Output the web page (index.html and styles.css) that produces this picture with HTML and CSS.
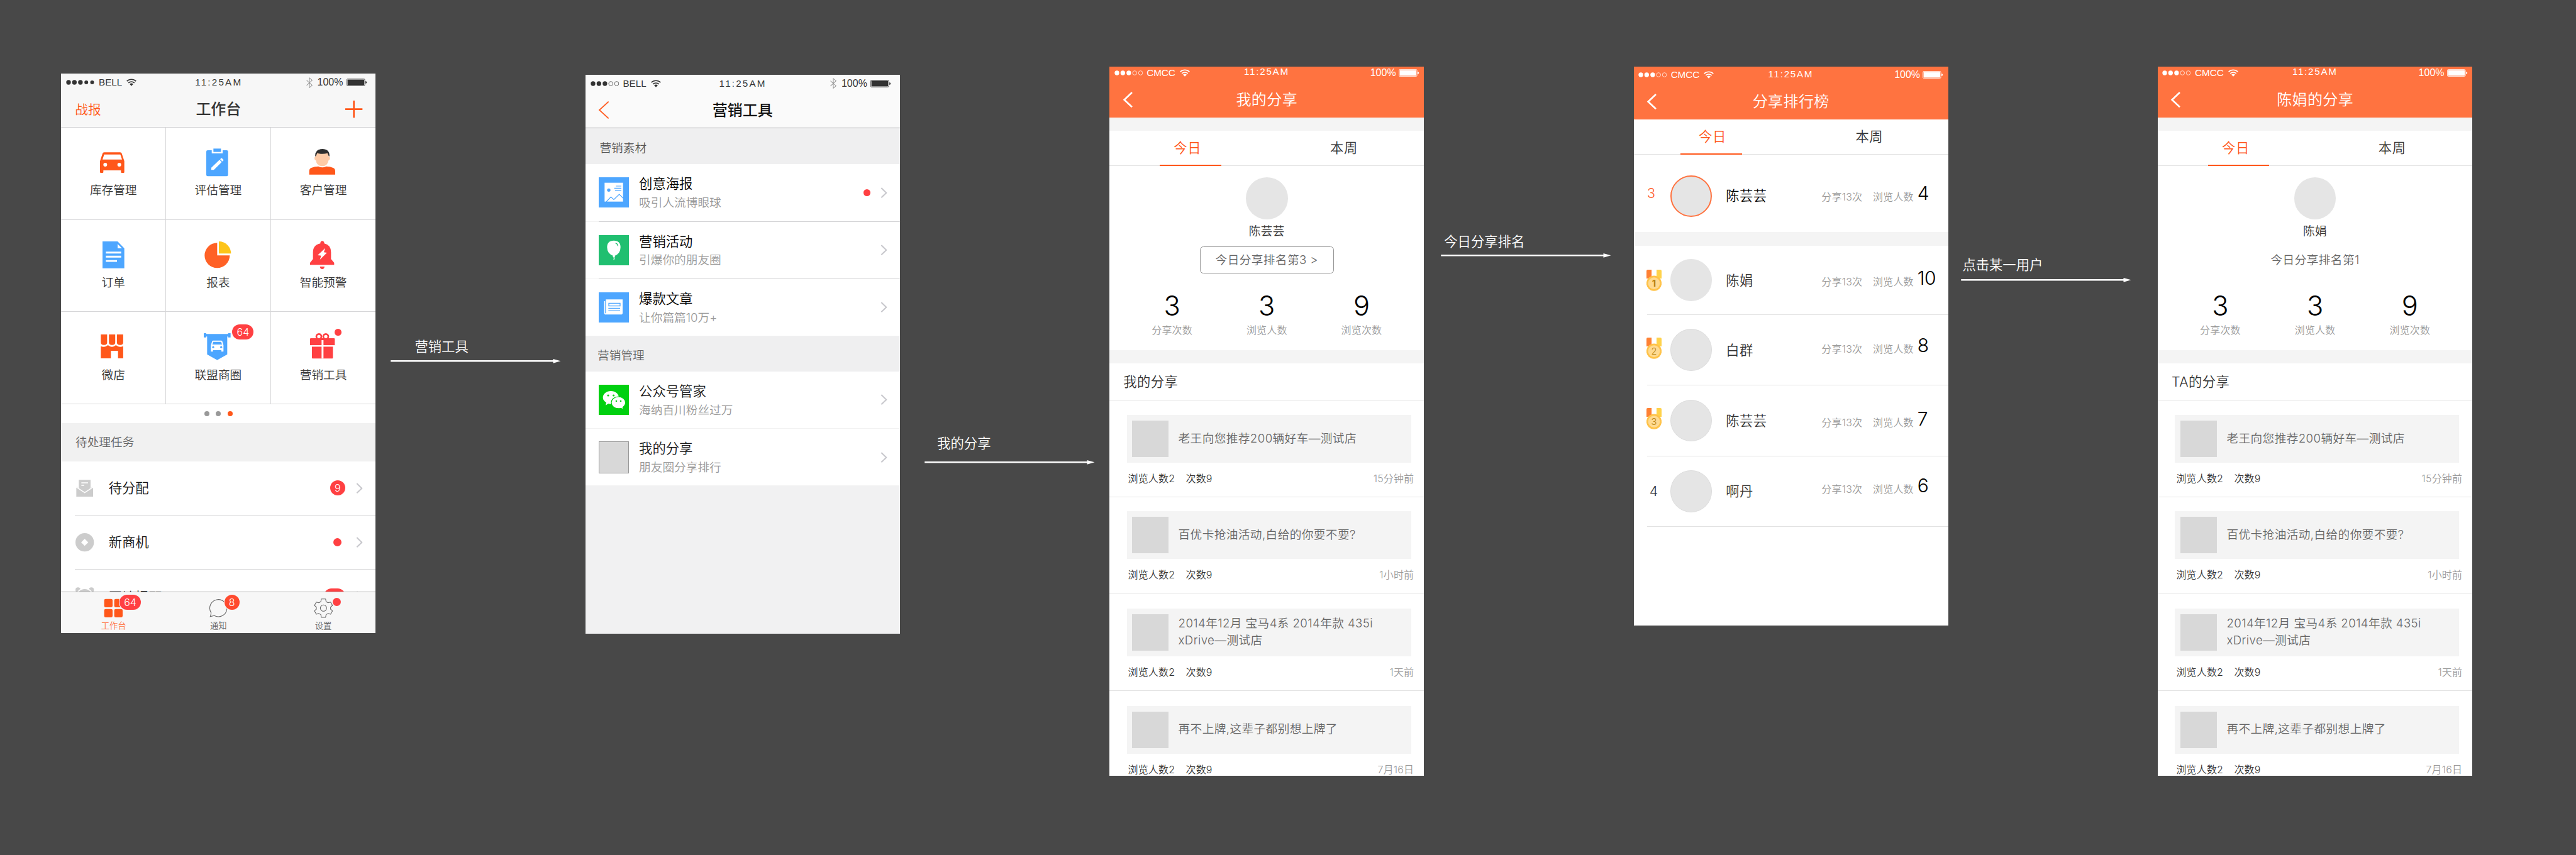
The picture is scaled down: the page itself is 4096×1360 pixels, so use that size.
FILE: index.html
```html
<!DOCTYPE html>
<html lang="zh-CN">
<head>
<meta charset="utf-8">
<title>分享流程</title>
<link rel="stylesheet" href="styles.css">
</head>
<body>
<svg class="defs" xmlns="http://www.w3.org/2000/svg">
  <symbol id="signal-full" viewBox="0 0 68 12"><g fill="currentColor"><circle cx="6" cy="6" r="5.5"/><circle cx="20" cy="6" r="5.5"/><circle cx="34.3" cy="6" r="5.5"/><circle cx="48.3" cy="6" r="4.5"/><circle cx="62.3" cy="6" r="4.5"/></g></symbol>
  <symbol id="signal-mid" viewBox="0 0 68 12"><g fill="currentColor"><circle cx="6" cy="6" r="5.5"/><circle cx="20" cy="6" r="5.5"/><circle cx="34.3" cy="6" r="5.5"/></g><g fill="none" stroke="currentColor" stroke-width="1.1"><circle cx="48.3" cy="6" r="5"/><circle cx="62.3" cy="6" r="5"/></g></symbol>
  <symbol id="wifi" viewBox="0 0 24 18"><g fill="none" stroke="currentColor" stroke-width="2.5"><path d="M1 6.2A16 16 0 0 1 23 6.2"/><path d="M4.8 10.4A10.5 10.5 0 0 1 19.2 10.4"/></g><path fill="currentColor" d="M12 17.6L7.6 13.3A6.4 6.4 0 0 1 16.4 13.3z"/></symbol>
  <symbol id="bluetooth" viewBox="0 0 15 26"><path fill="none" stroke="currentColor" stroke-width="1.6" d="M.8 6.8L14 19 7.5 24.6V1.4L14 7 .8 19.2"/></symbol>
  <symbol id="battery" viewBox="0 0 49 18"><rect x=".7" y=".7" width="43" height="16.6" rx="2.5" fill="none" stroke="currentColor" stroke-width="1.2"/><rect x="2.3" y="2.3" width="39.8" height="13.4" rx="1" fill="currentColor"/><path fill="currentColor" d="M45.3 6q3.2 1 3.2 3t-3.2 3z"/></symbol>
  <symbol id="chevron" viewBox="0 0 16 26"><path fill="none" stroke="#c7c7cc" stroke-width="3" d="M2 1.5L14 13 2 24.5"/></symbol>
  <symbol id="medal" viewBox="0 0 36 51"><path fill="#ff8033" d="M3 0h9.500v21H0V3q0-3 3-3z"/><path fill="#ffd24a" d="M24 0h9q3 0 3 3v18H24z"/><path fill="#fff" d="M12.500 0H24v21H12.500z"/><circle cx="18" cy="32.500" r="18.200" fill="#ffc34a"/><circle cx="18" cy="32.500" r="14" fill="#ffda91"/></symbol>
</svg>

<main class="board">

  <!-- 工作台 -->
  <section class="phone phone-home">
    <header class="bar">
      <div class="status">
        <div class="status-left"><svg class="signal"><use href="#signal-full"/></svg><span>BELL</span><svg class="wifi"><use href="#wifi"/></svg></div>
        <time>11:25AM</time>
        <div class="status-right"><svg class="bluetooth"><use href="#bluetooth"/></svg><span>100%</span><svg class="battery"><use href="#battery"/></svg></div>
      </div>
      <div class="nav">
        <span class="nav-link">战报</span>
        <h1>工作台</h1>
        <svg class="plus" viewBox="0 0 41 41"><path stroke="#ff571a" stroke-width="4" d="M0 20.500h41M20.500 0v41"/></svg>
      </div>
    </header>
    <div class="tools">
      <div class="tool">
        <svg viewBox="0 0 70 70"><path fill="#ff571a" d="M13 11h38q3 0 4 3l6 18v26q0 2-2 2h-4q-2 0-2-2v-4H11v4q0 2-2 2H5q-2 0-2-2V32L9 14q1-3 4-3z"/><path fill="#fff" d="M13 16h38.500l4 12H9z"/><circle cx="15.500" cy="40.500" r="4.500" fill="#fff"/><circle cx="49" cy="40.500" r="4.500" fill="#fff"/></svg>
        <span>库存管理</span>
      </div>
      <div class="tool">
        <svg viewBox="0 0 70 70"><rect x="6" y="6" width="52" height="62" rx="3.500" fill="#4da6ff"/><path fill="#fff" d="M19 5h26v8.500H19z"/><path fill="#4da6ff" d="M23 2h18v8H23z"/><path fill="#fff" d="M18 53v-5.500L37.500 29l5.500 5L24 53zM39 27.500l2.300-2.200q1-1 2 0l3.400 3.200q1 1 0 2l-2.200 2.200z"/></svg>
        <span>评估管理</span>
      </div>
      <div class="tool">
        <svg viewBox="0 0 70 70"><path fill="#ffcba6" d="M18 12h28l1.500 9q3 0 3 4.500 0 4-3.500 5-2 13.500-15 13.500T17 30.500q-3.500-1-3.500-5 0-4.500 3-4.500z"/><path fill="#2e2e2e" d="M15.300 20.500Q14.500 3 32.300 3t17 17.500L47.500 20l-2.800-6.800q-12.400 3-24.800 0L17 20z"/><path fill="#ff571a" d="M1 64v-8q0-6 5-8 8-3 17-3.200 9 4.500 18.500 0 9.500.2 16.500 3.200 5 2 5 8v8z"/></svg>
        <span>客户管理</span>
      </div>
      <div class="tool">
        <svg viewBox="0 0 70 70"><path fill="#4da6ff" d="M9 3h36l16 16.500V67H9z"/><path fill="#fff" d="M45 9v10.500h10.500zM17 27.300h36.500v4.400H17zM17 37.300h36.500v4.400H17zM17 47.500h26.500v4.200H17z"/></svg>
        <span>订单</span>
      </div>
      <div class="tool">
        <svg viewBox="0 0 70 70"><path fill="#ff6126" d="M32 6.500A30 30 0 1 0 62 36.500H32z"/><path fill="#fdc419" d="M36 3a29 29 0 0 1 29 29H36z"/></svg>
        <span>报表</span>
      </div>
      <div class="tool">
        <svg viewBox="0 0 70 70"><path fill="#ff4042" d="M27.500 8q0-6 4.500-6t5 6q16 3.500 16 21v16l7.500 9v5H3v-5l7-9V29Q10 11.500 27.500 8zM26.500 63h11q-.5 6-5.500 6t-5.500-6z"/><path fill="#fff" d="M39 19L21 36l8.500 1-3 9.500L43.300 30l-7.300-1z"/></svg>
        <span>智能预警</span>
      </div>
      <div class="tool">
        <svg viewBox="0 0 70 70"><path fill="#ff571a" d="M5 6h15v19q0 6-7.500 6T5 25zM24.300 6h15v19q0 6-7.500 6t-7.500-6zM43.300 6h15v19q0 6-7.500 6t-7.500-6zM5 34q8.500 3.500 15-1l2-2 2 2q7.500 5 15 0l2-2 2 2q6.500 4.500 15.300 1v29H46V45H29v18H5z"/></svg>
        <span>微店</span>
      </div>
      <div class="tool">
        <svg viewBox="0 0 70 70"><path fill="#4da6ff" d="M0 3h6v2h52V3h6v10h-6v-2h-2v42.500L32 67 8 53.500V11H6v2H0z"/><path fill="#fff" d="M22.500 20.500h19q2 0 2.600 1.600L47 31.500v14.500q0 1-1 1h-3q-1 0-1-1v-2.500H22V46q0 1-1 1h-3q-1 0-1-1V31.500l3-9.400q.6-1.600 2.500-1.600z"/><path fill="#4da6ff" d="M22.500 23.500h19l2 6.500h-23z"/><circle cx="22.500" cy="36.300" r="2.400" fill="#4da6ff"/><circle cx="41.500" cy="36.300" r="2.400" fill="#4da6ff"/></svg>
        <span>联盟商圈</span>
        <b class="badge tool-badge">64</b>
      </div>
      <div class="tool">
        <svg viewBox="0 0 70 70"><g fill="none" stroke="#ff4042" stroke-width="4"><ellipse cx="24" cy="11" rx="6" ry="6"/><ellipse cx="40.500" cy="11" rx="6" ry="6"/></g><path fill="#ff4042" d="M5 15h55q2 0 2 2v15H3V17q0-2 2-2zM7.500 35h50v27q0 1.500-1.500 1.500H9q-1.500 0-1.500-1.500z"/><path fill="#fff" d="M30.500 19.500H35v44h-4.500zM3 32h59v3H3z"/></svg>
        <span>营销工具</span>
        <i class="dot tool-dot"></i>
      </div>
    </div>
    <div class="pager"><i></i><i></i><i class="on"></i></div>
    <h2 class="group">待处理任务</h2>
    <ul class="tasks">
      <li>
        <svg class="task-icon" viewBox="0 0 44 44"><path fill="#ccc" d="M8 2h28v20L22 33 8 22z"/><path fill="#ccc" d="M2 18l20 13.500L42 18v24H2z"/><path fill="none" stroke="#fff" stroke-width="2.400" d="M1 18.500L22 32.500 43 18.500M14 9h16M14 15h7"/></svg>
        <span>待分配</span><b class="badge">9</b><svg class="chevron"><use href="#chevron"/></svg>
      </li>
      <li>
        <svg class="task-icon" viewBox="0 0 44 44"><circle cx="22" cy="22" r="22" fill="#ccc"/><path fill="#fff" d="M22 13.500l8.500 8.500-8.500 8.500-8.500-8.500z"/></svg>
        <span>新商机</span><i class="dot"></i><svg class="chevron"><use href="#chevron"/></svg>
      </li>
      <li>
        <svg class="task-icon" viewBox="0 0 44 44"><g fill="#ccc"><circle cx="6" cy="6.500" r="6"/><circle cx="38" cy="6.500" r="6"/><circle cx="22" cy="24" r="22" fill="#fff"/><circle cx="22" cy="23.500" r="19"/></g></svg>
        <span>回访提醒</span><b class="badge">12</b><svg class="chevron"><use href="#chevron"/></svg>
      </li>
    </ul>
    <nav class="tabbar">
      <a class="active">
        <svg viewBox="0 0 46 46"><g fill="#ff571a"><rect x="1" y="1" width="20" height="20" rx="3.500"/><rect x="25" y="1" width="20" height="20" rx="3.500"/><rect x="1" y="25" width="20" height="20" rx="3.500"/><rect x="25" y="25" width="20" height="20" rx="3.500"/></g></svg>
        <span>工作台</span><b class="badge tab-badge">64</b>
      </a>
      <a>
        <svg viewBox="0 0 46 46"><path fill="none" stroke="#666" stroke-width="1.600" d="M5.500 34A20.500 20.500 0 1 1 13 41q-5 1-9.500 2 2-5 2-9z"/></svg>
        <span>通知</span><b class="badge tab-badge alt">8</b>
      </a>
      <a>
        <svg viewBox="0 0 46 46"><g fill="none" stroke="#666" stroke-width="1.600" stroke-linejoin="round"><path d="M18 1h10l1.300 6.500 4.700 2.700L40 8.500l4.500 8-4.500 4v5l4.500 4-4.500 8-6-1.700-4.700 2.700L28 45H18l-1.300-6.500-4.700-2.700L6 37.500l-4.500-8 4.500-4v-5l-4.500-4L6 8.500l6 1.700 4.700-2.700z"/><circle cx="23" cy="23" r="7.500"/></g></svg>
        <span>设置</span><i class="dot tab-dot"></i>
      </a>
    </nav>
  </section>

  <div class="link link-1"><span>营销工具</span><svg viewBox="0 0 406 10"><path fill="#fff" d="M0 3.100h388V0l18 5-18 5V6.900H0z"/></svg></div>

  <!-- 营销工具 -->
  <section class="phone phone-marketing">
    <header class="bar">
      <div class="status">
        <div class="status-left"><svg class="signal"><use href="#signal-mid"/></svg><span>BELL</span><svg class="wifi"><use href="#wifi"/></svg></div>
        <time>11:25AM</time>
        <div class="status-right"><svg class="bluetooth"><use href="#bluetooth"/></svg><span>100%</span><svg class="battery"><use href="#battery"/></svg></div>
      </div>
      <div class="nav">
        <svg class="back" viewBox="0 0 24 42"><path fill="none" stroke="currentColor" stroke-width="2.600" d="M23.500 1L1.500 21l22 20"/></svg>
        <h1>营销工具</h1>
      </div>
    </header>
    <h2 class="group">营销素材</h2>
    <ul class="entries">
      <li>
        <svg class="entry-icon" viewBox="0 0 72 72"><path fill="#4da6ff" d="M0 0h72v72H0z"/><path fill="#fff" d="M14 13h44v45H14z"/><circle cx="24" cy="30.500" r="4" fill="#4da6ff"/><path fill="none" stroke="#4da6ff" stroke-width="1.800" d="M18 58.500L29 47l7 6 13-12.500 9.500 9.500M41 21h13M37 26h17M39 31h15"/></svg>
        <div><h3>创意海报</h3><p>吸引人流博眼球</p></div><i class="dot"></i><svg class="chevron"><use href="#chevron"/></svg>
      </li>
      <li>
        <svg class="entry-icon" viewBox="0 0 72 72"><path fill="#20bf70" d="M0 0h72v72H0z"/><path fill="#fff" d="M36 13q16 0 16 16 0 15-14 20.500l1.500 2.500h-2q1.500 4-.5 7h-2q1.500-4 0-7h-2l1.500-2.500Q20 44 20 29q0-16 16-16z"/><path fill="none" stroke="#20bf70" stroke-width="1.800" d="M40 19q5 1.500 6 7"/></svg>
        <div><h3>营销活动</h3><p>引爆你的朋友圈</p></div><svg class="chevron"><use href="#chevron"/></svg>
      </li>
      <li>
        <svg class="entry-icon" viewBox="0 0 72 72"><path fill="#4da6ff" d="M0 0h72v72H0z"/><path fill="#fff" d="M17 17h40v32q0 4-4 4H17q-4 0-4-4V21h4z"/><path fill="none" stroke="#4da6ff" stroke-width="1.800" d="M16.300 21v29M24 26h27v6.500H24zM23 38h28M23 44h28"/></svg>
        <div><h3>爆款文章</h3><p>让你篇篇10万+</p></div><svg class="chevron"><use href="#chevron"/></svg>
      </li>
    </ul>
    <h2 class="group group-manage">营销管理</h2>
    <ul class="entries soft">
      <li>
        <svg class="entry-icon" viewBox="0 0 72 72"><path fill="#00d010" d="M0 0h72v72H0z"/><path fill="#fff" d="M29 15c10.500 0 19 7 19 15.500S39.500 46 29 46q-3 0-6-1l-6.500 4 1.500-6.500q-8-5-8-12C10 22 18.500 15 29 15z"/><path fill="#fff" stroke="#00d010" stroke-width="1.800" d="M47 28.500c9.300 0 17 6 17 14 0 5-2.500 8.500-6.500 11.500l1.300 5-6-3q-2.800.8-5.800.8c-9.300 0-17-6.300-17-14.300s7.700-14 17-14z"/><g fill="#00d010"><circle cx="22.500" cy="25.500" r="2.400"/><circle cx="35.500" cy="25.500" r="2.400"/><circle cx="42" cy="39" r="2"/><circle cx="52.500" cy="39" r="2"/></g></svg>
        <div><h3>公众号管家</h3><p>海纳百川粉丝过万</p></div><svg class="chevron"><use href="#chevron"/></svg>
      </li>
      <li>
        <span class="entry-icon blank"></span>
        <div><h3>我的分享</h3><p>朋友圈分享排行</p></div><svg class="chevron"><use href="#chevron"/></svg>
      </li>
    </ul>
  </section>

  <div class="link link-2"><span>我的分享</span><svg viewBox="0 0 406 10"><path fill="#fff" d="M0 3.100h388V0l18 5-18 5V6.900H0z"/></svg></div>

  <!-- 我的分享 -->
  <section class="phone phone-share">
    <header class="bar orange">
      <div class="status">
        <div class="status-left"><svg class="signal"><use href="#signal-mid"/></svg><span>CMCC</span><svg class="wifi"><use href="#wifi"/></svg></div>
        <time>11:25AM</time>
        <div class="status-right"><span>100%</span><svg class="battery"><use href="#battery"/></svg></div>
      </div>
      <div class="nav">
        <svg class="back" viewBox="0 0 22 38"><path fill="none" stroke="currentColor" stroke-width="4" d="M21 1.500L2.500 19 21 36.500"/></svg>
        <h1>我的分享</h1>
      </div>
    </header>
    <div class="tabs"><span class="active">今日</span><span>本周</span></div>
    <div class="profile">
      <i class="avatar"></i>
      <strong>陈芸芸</strong>
      <span class="rank-button">今日分享排名第3 &gt;</span>
      <dl class="totals">
        <div><dt>分享次数</dt><dd>3</dd></div>
        <div><dt>浏览人数</dt><dd>3</dd></div>
        <div><dt>浏览次数</dt><dd>9</dd></div>
      </dl>
    </div>
    <h2 class="feed-title">我的分享</h2>
    <ul class="feed">
      <li><div class="card"><i></i><p>老王向您推荐200辆好车—测试店</p></div><div class="meta"><span>浏览人数2</span><span>次数9</span><time>15分钟前</time></div></li>
      <li><div class="card"><i></i><p>百优卡抢油活动,白给的你要不要?</p></div><div class="meta"><span>浏览人数2</span><span>次数9</span><time>1小时前</time></div></li>
      <li><div class="card"><i></i><p>2014年12月 宝马4系 2014年款 435i<br>xDrive—测试店</p></div><div class="meta"><span>浏览人数2</span><span>次数9</span><time>1天前</time></div></li>
      <li><div class="card"><i></i><p>再不上牌,这辈子都别想上牌了</p></div><div class="meta"><span>浏览人数2</span><span>次数9</span><time>7月16日</time></div></li>
    </ul>
  </section>

  <div class="link link-3"><span>今日分享排名</span><svg viewBox="0 0 406 10"><path fill="#fff" d="M0 3.100h388V0l18 5-18 5V6.900H0z"/></svg></div>

  <!-- 分享排行榜 -->
  <section class="phone phone-rank">
    <header class="bar orange">
      <div class="status">
        <div class="status-left"><svg class="signal"><use href="#signal-mid"/></svg><span>CMCC</span><svg class="wifi"><use href="#wifi"/></svg></div>
        <time>11:25AM</time>
        <div class="status-right"><span>100%</span><svg class="battery"><use href="#battery"/></svg></div>
      </div>
      <div class="nav">
        <svg class="back" viewBox="0 0 22 38"><path fill="none" stroke="currentColor" stroke-width="4" d="M21 1.500L2.500 19 21 36.500"/></svg>
        <h1>分享排行榜</h1>
      </div>
    </header>
    <div class="tabs"><span class="active">今日</span><span>本周</span></div>
    <div class="rank-row mine">
      <b class="place">3</b><i class="avatar"></i><strong>陈芸芸</strong>
      <div class="rank-stats"><span>分享13次</span><span>浏览人数</span><em>4</em></div>
    </div>
    <ol class="ranks">
      <li class="rank-row first">
        <span class="place"><svg class="medal" viewBox="0 0 36 51"><use href="#medal"/><text x="18" y="40.500" font-weight="700">1</text></svg></span><i class="avatar"></i><strong>陈娟</strong>
        <div class="rank-stats"><span>分享13次</span><span>浏览人数</span><em>10</em></div>
      </li>
      <li class="rank-row second">
        <span class="place"><svg class="medal" viewBox="0 0 36 51"><use href="#medal"/><text x="18" y="40.500">2</text></svg></span><i class="avatar"></i><strong>白群</strong>
        <div class="rank-stats"><span>分享13次</span><span>浏览人数</span><em>8</em></div>
      </li>
      <li class="rank-row third">
        <span class="place"><svg class="medal" viewBox="0 0 36 51"><use href="#medal"/><text x="18" y="40.500">3</text></svg></span><i class="avatar"></i><strong>陈芸芸</strong>
        <div class="rank-stats"><span>分享13次</span><span>浏览人数</span><em>7</em></div>
      </li>
      <li class="rank-row fourth">
        <b class="place">4</b><i class="avatar"></i><strong>啊丹</strong>
        <div class="rank-stats"><span>分享13次</span><span>浏览人数</span><em>6</em></div>
      </li>
    </ol>
  </section>

  <div class="link link-4"><span>点击某一用户</span><svg viewBox="0 0 406 10"><path fill="#fff" d="M0 3.100h388V0l18 5-18 5V6.900H0z"/></svg></div>

  <!-- 陈娟的分享 -->
  <section class="phone phone-share">
    <header class="bar orange">
      <div class="status">
        <div class="status-left"><svg class="signal"><use href="#signal-mid"/></svg><span>CMCC</span><svg class="wifi"><use href="#wifi"/></svg></div>
        <time>11:25AM</time>
        <div class="status-right"><span>100%</span><svg class="battery"><use href="#battery"/></svg></div>
      </div>
      <div class="nav">
        <svg class="back" viewBox="0 0 22 38"><path fill="none" stroke="currentColor" stroke-width="4" d="M21 1.500L2.500 19 21 36.500"/></svg>
        <h1>陈娟的分享</h1>
      </div>
    </header>
    <div class="tabs"><span class="active">今日</span><span>本周</span></div>
    <div class="profile">
      <i class="avatar"></i>
      <strong>陈娟</strong>
      <span class="rank-button plain">今日分享排名第1</span>
      <dl class="totals">
        <div><dt>分享次数</dt><dd>3</dd></div>
        <div><dt>浏览人数</dt><dd>3</dd></div>
        <div><dt>浏览次数</dt><dd>9</dd></div>
      </dl>
    </div>
    <h2 class="feed-title">TA的分享</h2>
    <ul class="feed">
      <li><div class="card"><i></i><p>老王向您推荐200辆好车—测试店</p></div><div class="meta"><span>浏览人数2</span><span>次数9</span><time>15分钟前</time></div></li>
      <li><div class="card"><i></i><p>百优卡抢油活动,白给的你要不要?</p></div><div class="meta"><span>浏览人数2</span><span>次数9</span><time>1小时前</time></div></li>
      <li><div class="card"><i></i><p>2014年12月 宝马4系 2014年款 435i<br>xDrive—测试店</p></div><div class="meta"><span>浏览人数2</span><span>次数9</span><time>1天前</time></div></li>
      <li><div class="card"><i></i><p>再不上牌,这辈子都别想上牌了</p></div><div class="meta"><span>浏览人数2</span><span>次数9</span><time>7月16日</time></div></li>
    </ul>
  </section>
</main>
</body>
</html>
```

FILE: styles.css
```css
/* 1rem = 100 design units; each phone is 7.5rem wide */
html { font-size: 66.677px; }
* { box-sizing: border-box; margin: 0; padding: 0; }
body {
  background: #484848;
  color: #333;
  font-family: Inter, "Noto Sans CJK SC", sans-serif;
  font-weight: 350;
  overflow: hidden;
}
ul, ol { list-style: none; }
i, em { font-style: normal; }
b, h1, h2, h3, strong { font-weight: 350; }
svg { display: block; flex: none; overflow: visible; }
.defs { position: absolute; width: 0; height: 0; }

.board { display: flex; align-items: flex-start; height: 20.39rem; padding-left: 1.46rem; }

.phone { flex: none; width: 7.5rem; background: #fff; overflow: hidden; display: flex; flex-direction: column; }
.phone > * { flex: none; }
.phone-home { margin-top: 1.76rem; height: 13.34rem; }
.phone-marketing { margin-top: 1.78rem; height: 13.34rem; background: #f1f1f2; }
.phone-share { margin-top: 1.59rem; height: 16.91rem; letter-spacing: .006rem; }
.phone-rank { margin-top: 1.59rem; height: 13.34rem; letter-spacing: .006rem; }

/* connectors between phones */
.link { flex: none; width: 5rem; color: #fff; font-size: .32rem; line-height: .4rem; }
.link svg { width: 4.06rem; height: .1rem; }
.link-1 { padding: 8.07rem 0 0 .35rem; }
.link-1 span { padding-left: .58rem; }
.link-1 svg { margin-top: .1rem; }
.link-2 { padding: 10.38rem 0 0 .58rem; }
.link-2 span { padding-left: .31rem; }
.link-2 svg { margin-top: .2rem; }
.link-3 { padding: 5.57rem 0 0 .4rem; }
.link-3 span { padding-left: .08rem; }
.link-3 svg { margin-top: .07rem; }
.link-4 { padding: 6.12rem 0 0 .3rem; }
.link-4 span { padding-left: .04rem; }
.link-4 svg { margin-top: .11rem; }
.link span { display: block; }

/* status bar and navigation bar */
.bar { height: 1.28rem; background: #f7f7f7; border-bottom: 1px solid #d2d2d4; }
.phone-marketing .bar { background: #fafafa; border-color: #a9a9ab; }
.bar.orange { background: #ff7340; color: #fff; border: 0; height: 1.22rem; }
.phone-rank .bar.orange { height: 1.265rem; }
.status {
  display: grid; grid-template-columns: 1fr auto 1fr; align-items: center;
  height: .42rem; padding: 0 .21rem 0 .12rem;
  font-family: "Liberation Sans", Arial, sans-serif; font-size: .228rem; line-height: .3rem; letter-spacing: 0;
}
.status time { letter-spacing: .033rem; padding-left: .1rem; }
.status-left, .status-right { display: flex; align-items: center; }
.status-right { justify-content: flex-end; }
.signal { width: .68rem; height: .12rem; margin-right: .095rem; }
.wifi { width: .24rem; height: .18rem; margin-left: .105rem; }
.bluetooth { width: .15rem; height: .26rem; margin-right: .12rem; color: #999; }
.battery { width: .49rem; height: .18rem; margin-left: .08rem; }
.status-right span { font-size: .24rem; }
.orange .status { height: .3rem; padding: 0 .12rem 0 .11rem; }
.orange .status time { margin-top: -.05rem; padding-left: 0; letter-spacing: .026rem; }
.orange .battery { margin-left: .06rem; }
.phone-rank .orange .status { height: .4rem; }

.nav { position: relative; display: flex; align-items: center; justify-content: center; height: .84rem; padding: 0 .32rem; }
.nav h1 { font-size: .36rem; line-height: .5rem; }
.phone-home h1, .phone-marketing h1 { font-weight: 500; }
.phone-marketing h1 { color: #111; padding-top: .02rem; }
.nav-link { position: absolute; left: .33rem; color: #ff571a; font-size: .31rem; }
.plus { position: absolute; right: .31rem; width: .41rem; height: .41rem; }
.back { position: absolute; left: .32rem; width: .24rem; height: .42rem; color: #ff571a; }
.orange .nav { height: .98rem; }
.phone-rank .orange .nav { height: .86rem; }
.orange .back { width: .22rem; height: .38rem; color: #fff; }

/* shared marks */
.badge {
  display: flex; align-items: center; justify-content: center;
  min-width: .36rem; height: .36rem; border-radius: .18rem;
  background: #ff4042; color: #fff; font-size: .24rem; line-height: 1;
}
.dot { display: block; width: .16rem; height: .16rem; border-radius: 50%; background: #ff4042; }
.chevron { width: .16rem; height: .26rem; }

/* home grid */
.tools { display: grid; grid-template-columns: 2.5rem 2.5rem 2.5rem; grid-auto-rows: 2.203rem; }
.tool {
  position: relative; display: flex; flex-direction: column; align-items: center;
  padding-top: .48rem; border-right: 1px solid #d6d6d8; border-bottom: 1px solid #d6d6d8;
  font-size: .28rem; line-height: .4rem;
}
.tool:nth-child(3n) { border-right: 0; }
.tool svg { width: .7rem; height: .7rem; margin-bottom: .13rem; }
.tool-badge { position: absolute; left: 1.58rem; top: .29rem; width: .51rem; }
.tool-dot { position: absolute; left: 1.52rem; top: .4rem; }
.pager { display: flex; justify-content: center; align-items: center; gap: .16rem; height: .45rem; }
.pager i { width: .12rem; height: .12rem; border-radius: 50%; background: #999; }
.pager .on { background: #ff571a; }
.group { height: .91rem; padding: .26rem .34rem 0; background: #f1f1f1; color: #666; font-size: .28rem; line-height: .4rem; }
.tasks { height: 3.11rem; overflow: hidden; }
.tasks li { display: flex; align-items: center; height: 1.29rem; margin-left: .32rem; padding-right: .31rem; border-bottom: 1px solid #d6d6d8; color: #111; font-size: .32rem; }
.task-icon { width: .44rem; height: .44rem; margin: 0 .35rem 0 .02rem; }
.tasks span { flex: 1; line-height: .45rem; }
.tasks .badge { margin-right: .26rem; }
.tasks li:last-child .badge { width: .51rem; }
.tasks li:last-child span { padding-top: .05rem; }
.tasks .dot { width: .2rem; height: .2rem; margin-right: .34rem; }
.tasks .chevron { width: .16rem; }
.tabbar { display: grid; grid-template-columns: 1fr 1fr 1fr; height: .99rem; background: #f7f7f7; border-top: 1px solid #b2b2b2; }
.tabbar a { position: relative; display: flex; flex-direction: column; align-items: center; padding-top: .145rem; color: #666; font-size: .2rem; line-height: .3rem; }
.tabbar .active { color: #ff7340; }
.tabbar svg { width: .46rem; height: .46rem; margin-bottom: .03rem; }
.tabbar .badge { line-height: .36rem; }
.tab-badge { position: absolute; left: 1.39rem; top: .05rem; min-width: .36rem; box-shadow: 0 0 0 1px #f7f7f7; }
.active .tab-badge { width: .51rem; }
.alt { background: #ff4a2e; }
.tab-dot { position: absolute; left: 1.47rem; top: .13rem; width: .2rem; height: .2rem; }

/* marketing lists */
.phone-marketing .group { height: .86rem; padding-top: .29rem; background: #efeff0; color: #555; }
.phone-marketing .group-manage { height: .84rem; padding: .27rem .29rem 0; color: #666; }
.entries { background: #fff; }
.entries li { position: relative; display: flex; align-items: center; height: 1.368rem; padding: 0 .31rem 0 .32rem; border-bottom: 1px solid #f2f2f2; }
.entries:not(.soft) li:not(:last-child)::after { content: ""; position: absolute; left: .32rem; right: 0; bottom: -1px; height: 1px; background: #d2d2d4; }
.entry-icon { width: .72rem; height: .72rem; margin-right: .24rem; }
.blank { height: .76rem; background: #d8d8d8; border: 1px solid #979797; }
.entries div { flex: 1; padding-top: .03rem; }
.entries h3 { color: #000; font-size: .32rem; line-height: .46rem; }
.soft h3 { color: #1a1a1a; }
.entries p { color: #999; font-size: .28rem; line-height: .44rem; }
.entries .dot { margin-right: .24rem; }

/* today / week tabs */
.tabs { position: relative; display: grid; grid-template-columns: 3.72rem 3.74rem; height: 1.15rem; padding-top: .32rem; border-bottom: 1px solid #e2e2e2; background: linear-gradient(#f4f4f4 .32rem, #fff .32rem); font-size: .32rem; line-height: .8rem; letter-spacing: .01rem; text-align: center; }
.tabs .active { position: relative; color: #ff571a; }
.tabs .active::after { content: ""; position: absolute; left: 1.2rem; bottom: -1px; width: 1.46rem; height: 2px; background: #ff571a; }
.phone-rank .tabs { height: .83rem; padding-top: 0; background: #fff; line-height: .82rem; grid-template-columns: 3.76rem 3.72rem; }
.phone-rank .tabs .active::after { left: 1.12rem; }

/* profile */
.avatar { display: block; flex: none; width: 1rem; height: 1rem; border-radius: 50%; background: #e5e5e5; }
.profile { display: flex; flex-direction: column; align-items: center; height: 4.4rem; padding-top: .27rem; }
.profile strong { margin-top: .1rem; font-size: .28rem; line-height: .4rem; }
.rank-button { width: 3.19rem; height: .64rem; margin-top: .15rem; border: 1px solid #979797; border-radius: .08rem; color: #666; font-size: .28rem; line-height: .64rem; text-align: center; }
.rank-button.plain { border-color: transparent; }
.totals { display: grid; grid-template-columns: repeat(3, 2.26rem); margin-top: .42rem; text-align: center; }
.totals div { display: flex; flex-direction: column-reverse; }
.totals dd { color: #000; font-size: .65rem; line-height: .7rem; letter-spacing: 0; }
.totals dt { color: #999; font-size: .24rem; line-height: .5rem; letter-spacing: .01em; }

/* share feed */
.feed-title { height: 1.2rem; padding: .32rem .33rem 0; border-bottom: 1px solid #e2e2e2; background: linear-gradient(#f4f4f4 .32rem, #fff .32rem); font-size: .32rem; line-height: .85rem; }
.feed li { height: 2.3rem; padding: .34rem .24rem 0 .41rem; border-bottom: 1px solid #e2e2e2; }
.feed li:nth-child(n+3) { height: 2.32rem; padding-top: .36rem; }
.card { display: flex; align-items: center; width: 6.78rem; height: 1.14rem; padding-left: .13rem; background: #f4f4f4; }
.card i { width: .87rem; height: .87rem; margin-right: .23rem; background: #d8d8d8; }
.card p { color: #666; font-size: .28rem; line-height: .4rem; white-space: nowrap; }
.meta { display: flex; gap: .26rem; padding: .18rem 0 0 .03rem; font-size: .24rem; line-height: .4rem; letter-spacing: .01em; }
.meta time { margin-left: auto; color: #999; }

/* ranking */
.rank-row { display: flex; align-items: center; height: 1.685rem; font-size: .32rem; }
.place { width: .55rem; padding-left: 0; text-align: center; }
.rank-row .avatar { border: 1px solid #ddd; }
.rank-row strong { flex: 1; margin-left: .33rem; line-height: .45rem; }
.rank-stats { display: flex; align-items: center; width: 3.02rem; color: #999; font-size: .24rem; line-height: .4rem; letter-spacing: .01em; }
.rank-stats span:first-child { width: 1.226rem; }
.rank-stats em { margin: -.18rem 0 0 .09rem; color: #000; font-size: .45rem; letter-spacing: -.02em; line-height: .5rem; }
.mine { height: 1.85rem; padding-top: .14rem; padding-left: .32rem; }
.mine .place { padding-right: .36rem; margin-top: -.14rem; color: #ff571a; }
.mine .avatar { border: .04rem solid #ff7340; }
.mine strong { color: #000; margin-top: -.03rem; }
.mine .rank-stats { margin-top: .05rem; }
.mine + .ranks { border-top: .33rem solid #f4f4f4; padding-left: .32rem; }
.ranks .place { width: .32rem; margin-right: .23rem; }
.ranks .rank-row { border-bottom: 1px solid #e2e2e2; }
.ranks .first { height: 1.65rem; }
.first .avatar { border-color: #e5e5e5; }
.first .rank-stats { margin-top: .09rem; }
.second .rank-stats { margin-top: -.03rem; }
.second .place { margin-top: -.08rem; }
.third .rank-stats { margin-top: .1rem; }
.third .place { margin-top: -.08rem; }
.fourth .rank-stats { margin-top: -.08rem; }
.medal { width: .36rem; height: .51rem; margin-left: -.02rem; }
.medal text { fill: #b8820f; font-size: 22px; text-anchor: middle; letter-spacing: 0; }
```
